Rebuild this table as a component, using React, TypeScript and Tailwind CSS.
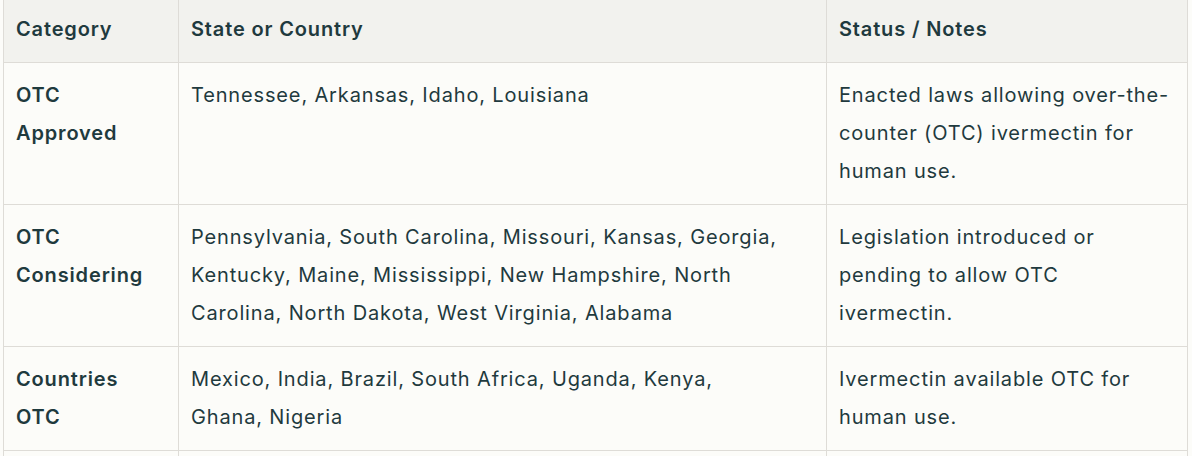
import React from 'react'

const rows = [
  {
    cat: ['OTC', 'Approved'],
    places: ['Tennessee, Arkansas, Idaho, Louisiana'],
    notes: ['Enacted laws allowing over-the-', 'counter (OTC) ivermectin for', 'human use.'],
  },
  {
    cat: ['OTC', 'Considering'],
    places: [
      'Pennsylvania, South Carolina, Missouri, Kansas, Georgia,',
      'Kentucky, Maine, Mississippi, New Hampshire, North',
      'Carolina, North Dakota, West Virginia, Alabama',
    ],
    notes: ['Legislation introduced or', 'pending to allow OTC', 'ivermectin.'],
  },
  {
    cat: ['Countries', 'OTC'],
    places: ['Mexico, India, Brazil, South Africa, Uganda, Kenya,', 'Ghana, Nigeria'],
    notes: ['Ivermectin available OTC for', 'human use.'],
  },
]

function Lines({ lines }: { lines: string[] }) {
  return (
    <>
      {lines.map((l, i) => (
        <span key={i} className="block whitespace-nowrap">
          {l}
        </span>
      ))}
    </>
  )
}

const cell = 'border border-[#dedcd7] px-[12px] pt-[13px] pb-[14px] text-left align-top'

export default function App() {
  return (
    <div className="h-[456px] overflow-hidden bg-[#fcfcf9] pl-[3px] pr-[5px] font-['Inter',sans-serif] text-[20px] leading-[38px] tracking-[0.85px] text-[#1f3a3e]">
      <table className="-mt-[4px] w-[1184px] table-fixed border-collapse">
        <colgroup>
          <col className="w-[175px]" />
          <col className="w-[648px]" />
          <col className="w-[361px]" />
        </colgroup>
        <thead>
          <tr className="bg-[#f2f2ee]">
            <th className={`${cell} font-semibold`}>Category</th>
            <th className={`${cell} font-semibold`}>State or Country</th>
            <th className={`${cell} font-semibold`}>Status / Notes</th>
          </tr>
        </thead>
        <tbody>
          {rows.map((r, i) => (
            <tr key={i}>
              <td className={`${cell} font-semibold`}>
                <Lines lines={r.cat} />
              </td>
              <td className={cell}>
                <Lines lines={r.places} />
              </td>
              <td className={cell}>
                <Lines lines={r.notes} />
              </td>
            </tr>
          ))}
          {/* next row starts just below the fold */}
          <tr>
            <td className={`${cell} h-[80px]`}></td>
            <td className={cell}></td>
            <td className={cell}></td>
          </tr>
        </tbody>
      </table>
    </div>
  )
}
